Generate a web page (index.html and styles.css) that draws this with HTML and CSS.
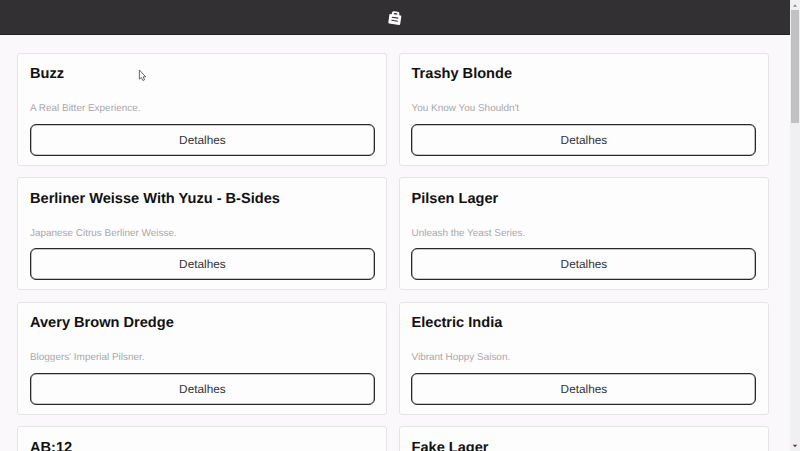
FILE: index.html
```html
<!DOCTYPE html>
<html lang="pt-BR">
<head>
<meta charset="utf-8">
<title>Cervejas</title>
<link rel="stylesheet" href="styles.css">
</head>
<body>
<div class="page">
  <header class="topbar">
    <svg class="bag" viewBox="0 0 14 14" width="14" height="14">
      <g transform="rotate(8 7 7)">
        <path d="M1 3.8h2.2V2.6Q3.2.5 5.3.5h3.4q2.1 0 2.1 2.1v1.2H13v8.4q0 1.1-1.1 1.1H2.1Q1 13.3 1 12.2z" fill="#fff"/>
        <path d="M5.2 3.5V2.8q0-.7.7-.7h2.2q.7 0 .7.7v.7z" fill="#333033"/>
        <path d="M3.8 6.7h6.5M3.8 9.8h6.5" stroke="#333033" stroke-width="1.1"/>
      </g>
    </svg>
  </header>
  <main class="grid">
    <article class="card"><h2 class="name">Buzz</h2><p class="tagline">A Real Bitter Experience.</p><button class="details">Detalhes</button></article>
    <article class="card"><h2 class="name">Trashy Blonde</h2><p class="tagline">You Know You Shouldn't</p><button class="details">Detalhes</button></article>
    <article class="card"><h2 class="name">Berliner Weisse With Yuzu - B-Sides</h2><p class="tagline">Japanese Citrus Berliner Weisse.</p><button class="details">Detalhes</button></article>
    <article class="card"><h2 class="name">Pilsen Lager</h2><p class="tagline">Unleash the Yeast Series.</p><button class="details">Detalhes</button></article>
    <article class="card"><h2 class="name">Avery Brown Dredge</h2><p class="tagline">Bloggers' Imperial Pilsner.</p><button class="details">Detalhes</button></article>
    <article class="card"><h2 class="name">Electric India</h2><p class="tagline">Vibrant Hoppy Saison.</p><button class="details">Detalhes</button></article>
    <article class="card"><h2 class="name">AB:12</h2></article>
    <article class="card"><h2 class="name">Fake Lager</h2></article>
  </main>
</div>
<div class="scrollbar">
  <svg class="arrow" viewBox="0 0 10 10"><path d="M3 6.7 5 4.3l2 2.4z" fill="#88868a"/></svg>
  <div class="thumb"></div>
  <svg class="arrow arrow-down" viewBox="0 0 10 10"><path d="M2.8 3.8h4.4L5 6.3z" fill="#444246"/></svg>
</div>
<svg class="cursor" viewBox="0 0 9 13" width="9" height="13"><path d="M1.4 1v9.2l2-1.8 1.5 3.1 1.7-.8-1.4-2.9h2.5z" fill="#fff" stroke="#444" stroke-width=".8"/></svg>
</body>
</html>
```

FILE: styles.css
```css
* {
  box-sizing: border-box;
}

body {
  margin: 0;
  display: flex;
  height: 451px;
  overflow: hidden;
  background: #faf8fb;
  font-family: "Liberation Sans", Arial, sans-serif;
  text-rendering: geometricPrecision;
}

.page {
  width: 790px;
  height: 451px;
  overflow: hidden;
}

.topbar {
  display: flex;
  justify-content: center;
  height: 35px;
  padding-top: 10.5px;
  background: #333033;
  border-bottom: 1px solid #242124;
}

.bag {
  display: block;
  margin-left: -1px;
}

.grid {
  display: grid;
  grid-template-columns: 370px 370px;
  grid-auto-rows: 113px;
  gap: 11.5px;
  padding: 17.8px 0 0 17.3px;
}

.card {
  padding: 11.7px 11.5px 0 11.7px;
  background: #fefdfe;
  border: 1px solid #e6e4e7;
  border-radius: 3px;
}

.name {
  margin: 0;
  color: #111;
  font-size: 14.6px;
  line-height: 18px;
  font-weight: 700;
  white-space: nowrap;
}

.tagline {
  margin: 20px 0 8.3px;
  color: #a9a7aa;
  font-size: 9.95px;
  line-height: 12px;
}

.details {
  display: block;
  width: 100%;
  height: 32px;
  padding: 0;
  background: #fefdfe;
  border: 1px solid #29272b;
  box-shadow: inset 0 0 0 0.3px #29272b;
  border-radius: 6px;
  color: #333;
  font: 11.8px "Liberation Sans", Arial, sans-serif;
  text-rendering: geometricPrecision;
}

.scrollbar {
  display: flex;
  flex-direction: column;
  width: 10px;
  height: 451px;
  background: #f0eff1;
}

.arrow {
  width: 10px;
  height: 10px;
}

.thumb {
  width: 8px;
  height: 113px;
  margin: 0 1px;
  background: #c1c0c2;
}

.arrow-down {
  margin-top: auto;
}

.cursor {
  position: absolute;
  left: 138px;
  top: 69px;
}
```
